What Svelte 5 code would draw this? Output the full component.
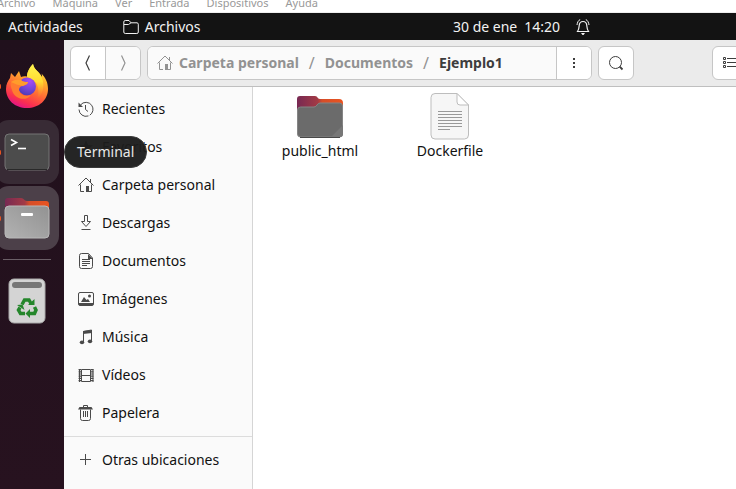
<script>
  const menus = ['Archivo', 'Máquina', 'Ver', 'Entrada', 'Dispositivos', 'Ayuda'];
  const places = [
    { id: 'recent', label: 'Recientes' },
    { id: 'star', label: 'Favoritos' },
    { id: 'home', label: 'Carpeta personal' },
    { id: 'download', label: 'Descargas' },
    { id: 'document', label: 'Documentos' },
    { id: 'image', label: 'Imágenes' },
    { id: 'music', label: 'Música' },
    { id: 'video', label: 'Vídeos' },
    { id: 'trash', label: 'Papelera' }
  ];
</script>

{#snippet icon(id)}
  <svg class="icon" viewBox="0 0 16 16" width="16" height="16" fill="none" stroke="currentColor" aria-hidden="true">
    {#if id === 'recent'}
      <path d="M2.500 4A7 7 0 1 1 1 8.500" stroke-dasharray="24 1.500" />
      <path d="M7.500 4v4.500l2.500 2" />
      <path d="M.5 1.500v4.500h4.500z" fill="currentColor" stroke="none" />
    {:else if id === 'star'}
      <path d="M8 1l2 5 5 .3-4 3.300 1.500 5L8 12l-4.500 2.600 1.500-5-4-3.300L6 6z" fill="currentColor" stroke="none" />
    {:else if id === 'home'}
      <path d="M.5 8.500L8 1l7.500 7.500M2.500 7.500v7H6M13.500 7.500v7H10M12.500 2v3" />
      <path d="M8 9h3v6H8z" fill="currentColor" stroke="none" />
    {:else if id === 'download'}
      <path d="M6.500 .5h3v6h3L8 11.500 3.500 6.500h3zM3.500 14.500h9" />
    {:else if id === 'document'}
      <path d="M10.500 .5h-7a2 2 0 0 0-2 2v11a2 2 0 0 0 2 2h9a2 2 0 0 0 2-2V5z" />
      <path d="M10 1v5h5zM4 6h8v1H4zM4 8h8v1H4zM4 10h8v1H4zM4 12h5v1H4z" fill="currentColor" stroke="none" />
    {:else if id === 'image'}
      <rect x=".5" y="1.500" width="15" height="13" rx="1.500" />
      <path d="M1 12h14v2H1zM3 11l3-5 2.500 3L10 8l2 3z" fill="currentColor" stroke="none" />
      <circle cx="11.500" cy="5" r="1.500" fill="currentColor" stroke="none" />
    {:else if id === 'music'}
      <path d="M5.500 13V2.500l8-1.500v11" />
      <path d="M5 2l9-1v3L5 5z" fill="currentColor" stroke="none" />
      <ellipse cx="4" cy="13.300" rx="2.200" ry="1.900" fill="currentColor" stroke="none" />
      <ellipse cx="12" cy="12.300" rx="2.200" ry="1.900" fill="currentColor" stroke="none" />
    {:else if id === 'video'}
      <path d="M3.500 2.500h9v12h-9zM3.500 8.500h9" />
      <path d="M1.800 2v13M14.200 2v13" stroke-width="2.500" stroke-dasharray="1.200 1" />
      <path d="M1.500 2v13M15 2v13" />
    {:else if id === 'trash'}
      <path d="M2.500 4.500v9a2 2 0 0 0 2 2h6a2 2 0 0 0 2-2v-9M5.500 6v6M7.500 6v6M9.500 6v6M5.500 2.500v-2h4v2" />
      <path d="M1.500 2h12L15 4.500H0z" fill="currentColor" stroke="none" />
    {:else if id === 'plus'}
      <path d="M7.500 2v11M2 7.500h11" />
    {:else if id === 'folder'}
      <path d="M.8 13V3a1.500 1.500 0 0 1 1.500-1.500H6L8 3.800h6A1.500 1.500 0 0 1 15.300 5.200V13a1.500 1.500 0 0 1-1.500 1.500H2.300A1.500 1.500 0 0 1 .8 13zM1 5.500h4.500L8 3.800" />
    {:else if id === 'bell'}
      <path d="M2.500 12.500C4 10.500 4 9 4.200 6.500 4.400 3.800 5.800 2.500 8 2.500s3.600 1.300 3.800 4c.2 2.500.2 4 1.700 6zM2 12.500h12" stroke-width="1.200" />
      <path d="M2 6C2.300 3.500 3.200 1.500 5.200 .5M14 6C13.700 3.500 12.800 1.500 10.800 .5" />
      <path d="M6 14h4L8.500 16h-1z" fill="currentColor" stroke="none" />
    {:else if id === 'prev'}
      <path d="M9.500 .5L6 8l3.500 7.500" stroke-width="1.200" />
    {:else if id === 'next'}
      <path d="M6.500 .5L10 8l-3.500 7.500" stroke-width="1.200" />
    {:else if id === 'dots'}
      <path d="M7 3h2v2H7zM7 7h2v2H7zM7 11h2v2H7z" fill="currentColor" stroke="none" />
    {:else if id === 'search'}
      <circle cx="7.500" cy="7.500" r="6" />
      <path d="M11.700 11.700l2.800 2.800" stroke-width="1.800" />
    {:else if id === 'list'}
      <path d="M1.500 2.500h2v2h-2zM1.500 6.500h2v2h-2zM1.500 10.500h2v2h-2zM5 3.500h11M5 7.500h11M5 11.500h11" />
    {/if}
  </svg>
{/snippet}

<div class="screen">
  <nav class="menus" aria-label="Máquina virtual">
    {#each menus as name}<button>{name}</button>{/each}
  </nav>

  <header class="panel">
    <button>Actividades</button>
    <button class="app">{@render icon('folder')}Archivos</button>
    <button class="clock"><span>30 de ene</span><span>14:20</span>{@render icon('bell')}</button>
  </header>

  <div class="desktop">
    <nav class="dock" aria-label="Aplicaciones">
      <button class="tile running" aria-label="Firefox">
        <svg viewBox="0 0 44 46" width="44" height="46">
          <defs>
            <linearGradient id="fx" x1=".8" y1="0" x2=".35" y2="1">
              <stop offset="0" stop-color="#fff44f" /><stop offset=".3" stop-color="#ffb62b" />
              <stop offset=".6" stop-color="#ff6a35" /><stop offset=".85" stop-color="#fa2f50" /><stop offset="1" stop-color="#e31587" />
            </linearGradient>
            <radialGradient id="globe" cx=".65" cy=".2" r=".85">
              <stop offset="0" stop-color="#a94bf5" /><stop offset=".55" stop-color="#7345d8" /><stop offset="1" stop-color="#4b3bb5" />
            </radialGradient>
            <linearGradient id="flame" x1=".5" y1="0" x2=".5" y2="1">
              <stop offset="0" stop-color="#fff44f" /><stop offset=".5" stop-color="#ffdc32" /><stop offset="1" stop-color="#ff8a2a" stop-opacity="0" />
            </linearGradient>
          </defs>
          <path d="M6 10l4 4 4-6 2 6c2-1 4-1 6-.5 0-5 3-9 6-12.500 1 6 6 7 9 13 0-2 0-3-1-4 5 5 7 10 7 16 0 11-9 19-21 19S1 37 1 26c0-5 2-8 4-11z" fill="url(#fx)" />
          <path d="M28 1c1 6 7 8 9 14 3 8 1 17-5 21 2-5 2-12-1-16-2-3-6-5-9-6 0-5 3-10 6-13z" fill="url(#flame)" />
          <circle cx="22" cy="23.500" r="9" fill="url(#globe)" />
          <path d="M6 19c3-2 6-3 10-2 2 2 4 2 7 2 0 2-3 3-5 4-3 0-4 2-4 4 1 5 7 7 12 5-5 7-17 4-19-5-1-3-2-5-1-8z" fill="#ff7c30" />
          <path d="M6 19c3-2 6-3 10-2 2 2 4 2 7 2 0 2-3 3-5 4-5-1-8-2-12-4z" fill="#ff9c2b" />
        </svg>
      </button>
      <button class="tile open running" aria-label="Terminal">
        <svg viewBox="0 0 46 38" width="46" height="38">
          <rect x="1" y="1" width="44" height="36" rx="4" fill="#4c4c4c" stroke="#757575" />
          <path d="M3 36.500h40" stroke="#292929" />
          <path d="M7 6.500l5.500 3L7 12.500" fill="none" stroke="#fff" stroke-width="1.600" />
          <path d="M14 15.500h8" stroke="#fff" stroke-width="1.600" />
        </svg>
      </button>
      <button class="tile active running" aria-label="Archivos">
        <svg viewBox="0 0 46 42" width="46" height="42">
          <defs>
            <linearGradient id="back"><stop stop-color="#772953" /><stop offset=".45" stop-color="#a33a45" /><stop offset=".55" stop-color="#d64d28" /><stop offset="1" stop-color="#e95420" /></linearGradient>
            <linearGradient id="front" y1="1" x2="1" y2="0"><stop stop-color="#b2b2b2" /><stop offset="1" stop-color="#929292" /></linearGradient>
          </defs>
          <path d="M1 25V4a3 3 0 0 1 3-3h13c3 0 3 3 6 3h19a3 3 0 0 1 3 3v18z" fill="url(#back)" />
          <rect x="1" y="9" width="44" height="32" rx="4" fill="url(#front)" stroke="#b9b9b9" />
          <rect x="17" y="16" width="12" height="3" rx="1" fill="#fff" />
        </svg>
      </button>
      <hr />
      <button class="tile" aria-label="Papelera">
        <svg viewBox="0 0 38 46" width="38" height="46">
          <rect x="1" y="1" width="36" height="44" rx="5" fill="#d4d4d4" stroke="#aaa" />
          <rect x="4" y="4" width="30" height="6" rx="3" fill="#777" />
          <g fill="none" stroke="#24862b" stroke-width="3.500">
            <path d="M14 26.500l2.500-4.500h4.500l2 3.500" />
            <path d="M26.500 29l1.500 3-1.500 3.500h-5" />
            <path d="M17 35.500h-4.500l-2-3.500 1.500-2.500" />
          </g>
          <path d="M26.500 21v6h-6.500zM22 31v9l-4.500-4.500zM9 27l5.500-.5 2 5.500z" fill="#24862b" />
        </svg>
      </button>
      <div class="tip" role="tooltip">Terminal</div>
    </nav>

    <div class="window">
      <header class="bar">
        <div class="group">
          <button aria-label="Atrás">{@render icon('prev')}</button>
          <button aria-label="Adelante" disabled>{@render icon('next')}</button>
        </div>
        <div class="group path">
          <nav class="crumbs" aria-label="Ruta">
            <a href="#home">{@render icon('home')}Carpeta personal</a><i>/</i>
            <a href="#documentos">Documentos</a><i>/</i>
            <a href="#ejemplo" class="here" aria-current="page">Ejemplo1</a>
          </nav>
          <button aria-label="Menú de carpeta">{@render icon('dots')}</button>
        </div>
        <div class="group"><button aria-label="Buscar">{@render icon('search')}</button></div>
        <div class="group view"><button aria-label="Vista de lista">{@render icon('list')}</button></div>
      </header>

      <div class="body">
        <aside>
          <nav class="places" aria-label="Lugares">
            {#each places as place}
              <a href="#{place.id}">{@render icon(place.id)}{place.label}</a>
            {/each}
          </nav>
          <nav class="places other" aria-label="Otros">
            <a href="#otras">{@render icon('plus')}Otras ubicaciones</a>
          </nav>
        </aside>
        <main>
          <button class="file">
            <svg viewBox="0 0 48 48" width="48" height="48">
              <path d="M1 30V6a3 3 0 0 1 3-3h15c3 0 2 3 5 3h19a4 4 0 0 1 4 4v20z" fill="url(#back)" />
              <path d="M1.500 17a3 3 0 0 1 3-3H18c3 0 3-4 6-4h19.500a3 3 0 0 1 3 3v28a3 3 0 0 1-3 3h-39a3 3 0 0 1-3-3z" fill="#6b6b6b" stroke="#858585" />
              <path d="M35 44l12-12v9a3 3 0 0 1-3 3z" fill="#777" />
              <path d="M4 44.500h40" stroke="#484848" />
            </svg>
            <span>public_html</span>
          </button>
          <button class="file">
            <svg viewBox="0 0 48 48" width="48" height="48">
              <path d="M9 .5h22L42.500 12v30a4 4 0 0 1-4 4H9a4 4 0 0 1-4-4V4.500a4 4 0 0 1 4-4z" fill="#f6f6f6" stroke="#bdbdbd" />
              <path d="M31 .5V9a3 3 0 0 0 3 3h8.500z" fill="#fff" stroke="#bdbdbd" />
              <path d="M12 18.500h24M12 21.500h24M12 24.500h24M12 27.500h24M12 30.500h24M12 33.500h24M12 36.500h12" stroke="#999" />
            </svg>
            <span>Dockerfile</span>
          </button>
        </main>
      </div>
    </div>
  </div>
</div>

<style>
  :global(body) { margin: 0; }
  .screen {
    display: flex;
    flex-direction: column;
    height: 100vh;
    overflow: hidden;
    font: 14px/20px "Noto Sans", "Open Sans", sans-serif;
    color: #111;
  }
  button {
    display: flex;
    align-items: center;
    justify-content: center;
    margin: 0;
    padding: 0;
    border: 0;
    background: none;
    font: inherit;
    color: inherit;
    white-space: nowrap;
  }
  a { color: inherit; text-decoration: none; }
  svg { display: block; flex: none; }

  .menus {
    display: flex;
    flex: none;
    align-items: flex-end;
    gap: 17px;
    height: 12px;
    margin-left: -3px;
    border-bottom: 1px solid #eee;
    overflow: hidden;
    font-size: 11px;
    line-height: 18px;
    color: #999;
  }

  .panel {
    display: flex;
    flex: none;
    align-items: center;
    position: relative;
    height: 27px;
    padding-left: 8px;
    gap: 40px;
    background: #131313;
    color: #f2f2f2;
  }
  .app { gap: 6px; }
  .clock {
    position: absolute;
    left: 453px;
    gap: 7px;
  }
  .clock .icon { margin-left: 8px; }

  .desktop { display: flex; flex: 1; min-height: 0; }
  .dock {
    position: relative;
    flex: none;
    box-sizing: border-box;
    display: flex;
    flex-direction: column;
    gap: 2px;
    width: 64px;
    padding-top: 14px;
    background: linear-gradient(#20101c, #27121f);
  }
  .tile {
    position: relative;
    width: 64px;
    height: 64px;
    margin-left: -5px;
    border-radius: 14px;
  }
  .open { background: #382b35; }
  .active { background: #4c4049; }
  .running::before {
    content: "";
    position: absolute;
    left: 3px;
    width: 3px;
    height: 5px;
    border-radius: 2px;
    background: #e95420;
  }
  hr { width: 48px; margin: 7px 0 7px 3px; border: 0; border-top: 1px solid #6b5f67; }
  .tip {
    position: absolute;
    z-index: 2;
    top: 96px;
    left: 64px;
    padding: 5px 12px;
    border: 1px solid #3a3a3a;
    border-radius: 16px;
    background: rgba(28, 28, 28, 0.96);
    color: #e8e8e8;
  }

  .window { display: flex; flex: 1; flex-direction: column; min-width: 0; }
  .bar {
    display: flex;
    flex: none;
    gap: 6px;
    padding: 6px 0 6px 6px;
    border-bottom: 1px solid #bfbfbf;
    background: #ebebeb;
    color: #3d3d3d;
  }
  .group {
    display: flex;
    flex: none;
    height: 32px;
    border: 1px solid #c6c6c6;
    border-radius: 6px;
    background: #fff;
    overflow: hidden;
  }
  .group button { width: 34px; }
  .group button + button, .path button { border-left: 1px solid #c6c6c6; width: 35px; }
  .group button:disabled { background: #fafafa; color: #929292; }
  .path { flex: 0 1 443px; min-width: 0; }
  .path button { flex: none; background: #fff; }
  .crumbs {
    display: flex;
    flex: 1;
    align-items: center;
    gap: 10px;
    padding-left: 9px;
    background: #fafafa;
    color: #929292;
    font-weight: 700;
    white-space: nowrap;
  }
  .crumbs a { display: flex; align-items: center; gap: 6px; }
  .crumbs i { font-style: normal; font-weight: 400; font-size: 16px; }
  .crumbs .here { color: #3d3d3d; }
  .view { margin-left: auto; margin-right: -12px; }

  .body { display: flex; flex: 1; min-height: 0; }
  aside {
    flex: none;
    width: 188px;
    border-right: 1px solid #d5d5d5;
    background: #fafafa;
  }
  .places { padding: 3px 0; }
  .places a {
    display: flex;
    align-items: center;
    gap: 8px;
    height: 38px;
    padding-left: 14px;
    white-space: nowrap;
  }
  .places .icon { color: #4a4a4a; }
  .other { margin-top: 1px; padding-top: 4px; border-top: 1px solid #dcdcdc; }
  main {
    display: flex;
    flex: 1;
    align-items: flex-start;
    gap: 10px;
    min-width: 0;
    padding: 6px 0 0 7px;
    background: #fff;
  }
  .file { flex-direction: column; width: 120px; }
</style>
